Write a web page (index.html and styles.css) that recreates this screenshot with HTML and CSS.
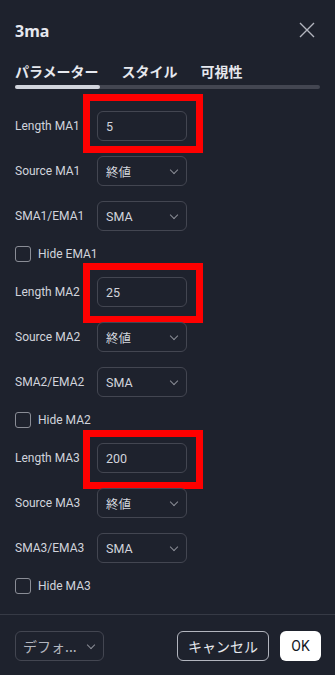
FILE: index.html
```html
<!DOCTYPE html>
<html lang="ja">
<head>
<meta charset="utf-8">
<title>3ma</title>
<link rel="stylesheet" href="styles.css">
</head>
<body>
<div class="dialog">
  <div class="header">
    <div class="title">3ma</div>
    <svg class="close" width="16" height="16" viewBox="0 0 16 16"><path d="M1 1L15 15M15 1L1 15" stroke="#b2b5be" stroke-width="1.4" fill="none"/></svg>
  </div>
  <div class="tabs">
    <span class="tab">パラメーター</span>
    <span class="tab">スタイル</span>
    <span class="tab">可視性</span>
  </div>
  <div class="track"><div class="track-active"></div></div>

  <div class="content">
    <div class="row"><div class="label">Length MA1</div><div class="field"><div class="input">5</div><div class="mark mark-1"></div></div></div>
    <div class="row"><div class="label">Source MA1</div><div class="select">終値<span class="chev"></span></div></div>
    <div class="row"><div class="label">SMA1/EMA1</div><div class="select">SMA<span class="chev"></span></div></div>
    <div class="check-row"><span class="box"></span>Hide EMA1</div>

    <div class="row"><div class="label">Length MA2</div><div class="field"><div class="input">25</div><div class="mark mark-2"></div></div></div>
    <div class="row"><div class="label">Source MA2</div><div class="select">終値<span class="chev"></span></div></div>
    <div class="row"><div class="label">SMA2/EMA2</div><div class="select">SMA<span class="chev"></span></div></div>
    <div class="check-row"><span class="box"></span>Hide MA2</div>

    <div class="row"><div class="label">Length MA3</div><div class="field"><div class="input">200</div><div class="mark mark-3"></div></div></div>
    <div class="row"><div class="label">Source MA3</div><div class="select">終値<span class="chev"></span></div></div>
    <div class="row"><div class="label">SMA3/EMA3</div><div class="select">SMA<span class="chev"></span></div></div>
    <div class="check-row"><span class="box"></span>Hide MA3</div>
  </div>

  <div class="footer">
    <div class="preset">デフォ...<span class="chev"></span></div>
    <div class="spacer"></div>
    <div class="btn cancel">キャンセル</div>
    <div class="btn ok">OK</div>
  </div>
</div>
</body>
</html>
```

FILE: styles.css
```css
* { box-sizing: border-box; }
html, body { margin: 0; padding: 0; }
body {
  background: #1e222d;
  color: #d1d4dc;
  font-family: Roboto, "Noto Sans CJK JP", sans-serif;
  width: 335px;
  height: 675px;
  overflow: hidden;
}
.dialog { display: flex; flex-direction: column; height: 675px; }
.header {
  display: flex;
  align-items: center;
  justify-content: space-between;
  padding: 20px 20px 0 15px;
  height: 42px;
}
.title { font-family: "Noto Sans", sans-serif; font-size: 16px; font-weight: 700; line-height: 22px; color: #e6e8ee; }
.close { display: block; margin-top: -3px; }
.tabs {
  display: flex;
  gap: 23px;
  padding: 0 15px;
  margin-top: 19px;
  height: 20px;
  align-items: center;
}
.tab { font-size: 14px; font-weight: 700; line-height: 20px; color: #e6e8ee; font-family: "Noto Sans CJK JP", sans-serif; }
.track {
  margin: 4px 15px 0 15px;
  height: 4px;
  border-radius: 2px;
  background: #434651;
}
.track-active { width: 85px; height: 4px; border-radius: 2px; background: #d1d4dc; }
.content {
  display: flex;
  flex-direction: column;
  gap: 15px;
  padding: 22px 15px 20px 15px;
}
.row { display: flex; align-items: center; height: 30px; }
.label { width: 82px; flex: none; font-size: 12px; line-height: 18px; color: #d1d4dc; white-space: nowrap; }
.field { position: relative; }
.input, .select {
  width: 90px;
  height: 30px;
  border: 1px solid #434651;
  border-radius: 6px;
  padding-left: 8px;
  display: flex;
  align-items: center;
  font-size: 12.5px;
  color: #d1d4dc;
}
.select { position: relative; }
.chev {
  position: absolute;
  right: 9px;
  top: 10px;
  width: 6px;
  height: 6px;
  border-right: 1.2px solid #8a8d96;
  border-bottom: 1.2px solid #8a8d96;
  transform: rotate(45deg);
}
.check-row {
  display: flex;
  align-items: center;
  gap: 7px;
  height: 16px;
  font-size: 12px;
  color: #d1d4dc;
}
.box {
  width: 16px;
  height: 16px;
  border: 1px solid #8a8d96;
  border-radius: 3px;
}
.mark {
  position: absolute;
  left: -14px;
  width: 120px;
  border: 7px solid #ff0000;
}
.mark-1 { top: -17px; height: 59px; }
.mark-2 { top: -14px; height: 60px; }
.mark-3 { top: -13px; height: 59px; }
.footer {
  border-top: 1px solid #363a45;
  display: flex;
  align-items: center;
  padding: 16px 14px 0 15px;
  gap: 11px;
}
.spacer { flex: 1; }
.preset {
  position: relative;
  width: 89px;
  height: 30px;
  border: 1px solid #434651;
  border-radius: 6px;
  padding-left: 7px;
  display: flex;
  align-items: center;
  font-size: 14px;
  color: #b2b5be;
  font-family: "Noto Sans CJK JP", sans-serif;
}
.btn {
  height: 30px;
  border-radius: 6px;
  display: flex;
  align-items: center;
  justify-content: center;
  font-size: 14px;
  font-family: "Noto Sans CJK JP", sans-serif;
}
.cancel { width: 92px; border: 1px solid #b2b5be; color: #e6e8ee; }
.ok { width: 41px; background: #ffffff; color: #131722; font-family: Roboto, sans-serif; }
```
